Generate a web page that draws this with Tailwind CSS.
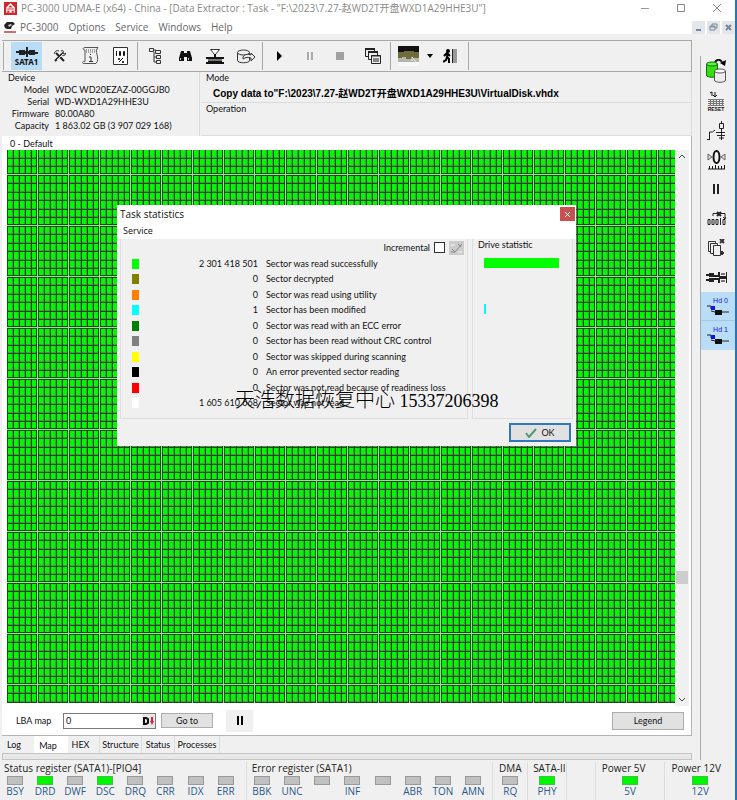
<!DOCTYPE html>
<html lang="en">
<head>
  <meta charset="UTF-8">
  <meta name="viewport" content="width=device-width, initial-scale=1">
  <title>PC-3000 UDMA-E</title>
  <script src="https://cdn.jsdelivr.net/npm/@tailwindcss/browser@4"></script>
</head>
<body class="bg-[#f0f0f0] text-[#111] font-['Lato','Noto_Sans_CJK_SC',sans-serif] text-[9px] leading-3">
<div class="relative min-h-screen flex flex-col border-r-2 border-[#2b73b5]">

  <!-- Title bar -->
  <header class="bg-white font-['Open_Sans','Noto_Sans_CJK_SC',sans-serif] text-[#8a8a8a]">
    <div class="h-4 flex items-center pl-1">
      <svg class="w-[13px] h-[13px] mr-1 shrink-0" viewBox="0 0 12 12"><rect width="12" height="12" fill="#d8232a"/><path d="M6 1 2 5v5h8V5z" fill="#fff"/><path d="M6 3 4 5h4zM3 6h6v1H3zM3 8h2v2H3zM7 8h2v2H7z" fill="#d8232a"/></svg>
      <h1 class="text-[10px] whitespace-nowrap">PC-3000 UDMA-E (x64) - China - [Data Extractor : Task - "F:\2023\7.27-赵WD2T开盘WXD1A29HHE3U"]</h1>
      <div class="ml-auto flex">
        <button class="w-9 h-4 flex items-center justify-center" aria-label="Minimize"><svg class="w-2 h-2" viewBox="0 0 8 8" stroke="#999"><path d="M0 4.5h8"/></svg></button>
        <button class="w-9 h-4 flex items-center justify-center" aria-label="Maximize"><svg class="w-2 h-2" viewBox="0 0 8 8" stroke="#888" fill="none"><path d="M.5.5h7v7h-7z"/></svg></button>
        <button class="w-9 h-4 flex items-center justify-center" aria-label="Close"><svg class="w-2 h-2" viewBox="0 0 8 8" stroke="#888"><path d="m0 0 8 8M8 0 0 8"/></svg></button>
      </div>
    </div>
    <div class="h-[18px] flex items-center pl-1 pt-1">
      <svg class="w-3 h-3 mr-1 shrink-0" viewBox="0 0 12 12"><path d="M0 4 3 1h6l2 2-3 2-1 3H3L1 7z" fill="#222"/><path d="m4 4 3-1 1 1-3 2z" fill="#ccc"/><path d="M0 10h12v2H0z" fill="#d96a6a"/></svg>
      <nav class="flex gap-[10px] text-[10px] text-[#666]">
        <button>PC-3000</button><button>Options</button><button>Service</button><button>Windows</button><button>Help</button>
      </nav>
      <div class="ml-auto flex gap-[2px]">
        <button class="w-[13px] h-[13px] bg-[#e3e7ec]" aria-label="Minimize child"><svg class="w-full h-full" viewBox="0 0 13 13"><path d="M4 9h5" stroke="#7a8796" stroke-width="2"/></svg></button>
        <button class="w-[13px] h-[13px] bg-[#e3e7ec]" aria-label="Restore child"><svg class="w-full h-full" viewBox="0 0 13 13" fill="none" stroke="#7a8796"><path d="M5 5V3h5v4H8M3 5h5v4H3zM3 6h5"/></svg></button>
        <button class="w-[13px] h-[13px] bg-[#e3e7ec]" aria-label="Close child"><svg class="w-full h-full" viewBox="0 0 13 13" stroke="#7a8796" stroke-width="2"><path d="m4 4 5 5M9 4 4 9"/></svg></button>
      </div>
    </div>
  </header>

  <div class="flex flex-1">
    <main class="flex-1 min-w-0 flex flex-col pl-[2px] pr-2 pt-[6px]">

      <!-- Toolbar -->
      <div class="h-8 flex items-center border-t border-b border-r border-[#a8a8a8] pl-px">
        <span class="w-px h-7 bg-[#aaa] mr-[7px]"></span>
        <button class="w-[31px] h-7 bg-[#b9dcf7] flex flex-col items-center justify-center">
          <svg class="w-[22px] h-[10px]" viewBox="0 0 22 10" fill="#222"><path d="M0 5h22v1H0zM3 3h6v5H3zM13 3h6v5h-6zM10 0h2v10h-2zM9 4h4v3H9z"/><path d="M0 4h3v1H0zM19 6h3v1h-3z"/></svg>
          <span class="font-['Noto_Sans'] font-bold text-[8px] leading-[9px]">SATA1</span>
        </button>
        <button class="w-[30px] h-7 ml-[3px] grid place-items-center" aria-label="Tools"><svg class="w-3 h-3" viewBox="0 0 12 12" fill="none" stroke="#222"><path d="m1 11 8-8M2 3l8 8" stroke-width="2"/><path d="M0 4c1-3 3-4 5-3M7 1c2-1 3 0 2 2 1 1 2 1 3 0-1 3-3 3-4 2"/><path d="m3 10 6-6" stroke="#eee"/></svg></button>
        <button class="w-[30px] h-7 grid place-items-center" aria-label="Information"><svg class="w-[17px] h-[18px]" viewBox="0 0 17 18" fill="none" stroke="#555"><path d="M3 .5h13c-2 2-2 4-1 7s1 7-1 9H2c-2 0-2-2 0-2h1V3C1 3 0 1 3 .5z"/><path d="M4 3h9M4 5h9" stroke-dasharray="1 1"/><path d="M8.500 7v1M7 10h2v4M7 14.500h4" stroke="#333"/></svg></button>
        <button class="w-[30px] h-7 grid place-items-center" aria-label="Percentage"><svg class="w-[15px] h-[18px]" viewBox="0 0 15 18"><path d="M.5.5h14v17H.5z" fill="#fff" stroke="#333"/><path d="M3.500 4v5M6.500 4.500h1v4h-1zM10.500 4.500h1v4h-1z" fill="none" stroke="#111"/><path d="m6 15 4-4" stroke="#111"/><circle cx="6" cy="12" r="1"/><circle cx="10" cy="15" r="1"/></svg></button>
        <span class="w-px h-7 bg-[#aaa] mx-[2px]"></span>
        <button class="w-[30px] h-7 grid place-items-center" aria-label="Tree"><svg class="w-[13px] h-[16px]" viewBox="0 0 13 16" fill="#eee" stroke="#333"><path d="M.5.5h4v3h-4zM6.500 2.500h5v3h-5zM7.500 7.500h4v3h-4zM7.500 12.500h4v3h-4z"/><path d="M5 2h2M5 4v10h2M5 9h2" fill="none"/></svg></button>
        <button class="w-[30px] h-7 grid place-items-center" aria-label="Find"><svg class="w-[13px] h-[12px]" viewBox="0 0 13 12" fill="#111"><path d="M2 1h3v2h3V1h3l2 7v3H8V7H5v4H0V8z"/><path d="M1 8h1v2H1zM9 8h1v2H9zM3 2v3" fill="#ccc"/></svg></button>
        <button class="w-[30px] h-7 grid place-items-center" aria-label="Filter"><svg class="w-[18px] h-[17px]" viewBox="0 0 18 17"><path d="M4.500 1.500h9L9 7z" fill="#fff" stroke="#333"/><path d="M0 9h18v2H0zM2 11h14v3H2zM0 14h18v2H0zM8 6h2v4H8z" fill="#111"/><path d="M1 12h16" stroke="#ddd"/></svg></button>
        <button class="w-[30px] h-7 ml-px grid place-items-center" aria-label="Disk export"><svg class="w-[19px] h-[15px]" viewBox="0 0 19 15" fill="#eee" stroke="#333"><path d="M.5 3.500v8c0 3 12 3 12 0v-8"/><ellipse cx="6.500" cy="3.500" rx="6" ry="2.500"/><path d="M6 8c2-3 5-3 8-2V4l4 4-4 4V9c-3-1-5-1-8 1z"/></svg></button>
        <span class="w-px h-7 bg-[#aaa] mx-px"></span>
        <button class="w-[30px] h-7 grid place-items-center" aria-label="Start"><svg class="w-2 h-[10px]" viewBox="0 0 8 10"><path d="m2 0 5 5-5 5z"/></svg></button>
        <button class="w-[30px] h-7 ml-px grid place-items-center" aria-label="Pause"><svg class="w-2 h-[10px]" viewBox="0 0 8 10" fill="#aaa"><path d="M1 1h2v8H1zM5 1h2v8H5z"/></svg></button>
        <button class="w-[30px] h-7 grid place-items-center" aria-label="Stop"><svg class="w-2 h-2" viewBox="0 0 8 8"><path d="M0 0h8v8H0z" fill="#a0a0a0"/></svg></button>
        <button class="w-[30px] h-7 ml-[3px] grid place-items-center" aria-label="Windows"><svg class="w-[16px] h-[16px]" viewBox="0 0 16 16" fill="#eee" stroke="#222"><path d="M.5.5h9v8h-9z"/><path d="M0 1h10" stroke-width="2"/><path d="M3.500 3.500h9v8h-9z"/><path d="M3 4h10" stroke-width="2"/><path d="M6.500 7.500h9v8h-9z"/><path d="M6 8h10M8 11h6M8 13h6"/></svg></button>
        <span class="w-px h-7 bg-[#aaa] mx-[2px]"></span>
        <button class="w-[30px] h-7 grid place-items-center" aria-label="Map view"><svg class="w-[21px] h-[20px]" viewBox="0 0 21 20"><path d="M0 0h21v20H0z" fill="#f8f8f8"/><path d="M0 0h21v6H0z" fill="#111"/><path d="M0 6h6V5h10v1h5v7H0z" fill="#6e6b3c"/><path d="M0 12h4v-1h4v2h8v-1h5v4H0z" fill="#b5b5b0"/><path d="m14 11 5 6M14 11v4" stroke="#eee"/></svg></button>
        <button class="w-[11px] h-7 ml-px grid place-items-center" aria-label="Map view menu"><svg class="w-[6px] h-[4px]" viewBox="0 0 6 4"><path d="M0 0h6L3 4z"/></svg></button>
        <button class="w-[30px] h-7 grid place-items-center" aria-label="Exit"><svg class="w-[14px] h-[14px]" viewBox="0 0 14 14"><path d="M9 0h5v14H9z" fill="#999"/><path d="M9.500 0v14" stroke="#222"/><circle cx="5" cy="2" r="2"/><path d="m5 4-1 4 2 2v4M4 8l-1 3-3 2M1 7l3-3 3 3" fill="none" stroke="#000" stroke-width="2"/></svg></button>
        <span class="w-px h-7 bg-[#aaa] mx-[3px]"></span>
      </div>

      <!-- Device and mode -->
      <div class="h-[64px] flex gap-px">
        <section class="w-[198px] border-r border-[#ddd] pl-[6px]">
          <h2>Device</h2>
          <dl class="grid grid-cols-[41px_1fr] gap-x-[6px] auto-rows-[12px] leading-[12px] whitespace-nowrap">
            <dt class="text-right">Model</dt><dd>WDC WD20EZAZ-00GGJB0</dd>
            <dt class="text-right">Serial</dt><dd>WD-WXD1A29HHE3U</dd>
            <dt class="text-right">Firmware</dt><dd>80.00A80</dd>
            <dt class="text-right">Capacity</dt><dd>1 863.02 GB (3 907 029 168)</dd>
          </dl>
        </section>
        <div class="flex-1 flex flex-col">
          <section class="h-[31px] border-b border-r border-[#dcdcdc] pl-[5px]">
            <h2>Mode</h2>
            <p class="pl-[7px] pt-[4px] text-black text-[10px] font-bold whitespace-nowrap font-['Liberation_Sans','Noto_Sans_CJK_SC',sans-serif]">Copy data to"F:\2023\7.27-赵WD2T开盘WXD1A29HHE3U\VirtualDisk.vhdx</p>
          </section>
          <section class="flex-1 border-b border-r border-[#dcdcdc] pl-[5px]"><h2>Operation</h2></section>
        </div>
      </div>

      <!-- Sector map -->
      <section class="flex-1 flex flex-col bg-white border-r border-b border-[#b5b5b5]">
        <h2 class="h-[14px] pl-[8px] pt-[2px]">0 - Default</h2>
        <div class="flex-1 flex pl-[5px]">
          <svg class="flex-1 min-w-0 h-[553px]" viewBox="0 0 668 553" preserveAspectRatio="none">
            <defs>
              <!-- five by six sectors, closed by a light line on the right and at the bottom -->
              <pattern id="block" y="25" width="31" height="51" patternUnits="userSpaceOnUse">
                <rect width="31" height="51" fill="#00f800"/>
                <path d="M5 0h1v51H5zM11 0h1v51h-1zM17 0h1v51h-1zM23 0h1v51h-1zM0 7h31v1H0zM0 16h31v1H0zM0 24h31v1H0zM0 33h31v1H0zM0 41h31v1H0z" fill="#5c8a55"/>
                <path d="M0 0h1v51H0zM6 0h1v51H6zM12 0h1v51h-1zM18 0h1v51h-1zM24 0h1v51h-1zM29 0h1v51h-1zM0 0h31v1H0zM0 8h31v1H0zM0 17h31v1H0zM0 25h31v1H0zM0 34h31v1H0zM0 42h31v1H0zM0 49h31v1H0z" fill="#085808"/>
                <path d="M30 0h1v51h-1zM0 50h31v1H0z" fill="#b2cfaa"/>
              </pattern>
            </defs>
            <rect width="668" height="553" fill="url(#block)"/>
          </svg>
          <div class="w-[14px] bg-[#f0f0f0] flex flex-col items-center pt-1 pb-1">
            <svg class="w-[6px] h-[4px]" viewBox="0 0 6 4" fill="none" stroke="#444"><path d="m0 4 3-3 3 3"/></svg>
            <span class="flex-[408]"></span>
            <span class="w-3 h-[13px] bg-[#cdcdcd]"></span>
            <span class="flex-[113]"></span>
            <svg class="w-[6px] h-[4px]" viewBox="0 0 6 4" fill="none" stroke="#444"><path d="m0 0 3 3 3-3"/></svg>
          </div>
          <span class="w-[2px] bg-white"></span>
        </div>
        <div class="h-[29px] flex items-center pl-[14px] pr-[7px]">
          <label for="lba" class="w-[47px]">LBA map</label>
          <div class="w-[93px] h-4 flex border border-[#7a7a7a]">
            <input id="lba" value="0" class="flex-1 min-w-0 pl-[2px] outline-none">
            <button class="w-[13px] bg-[#e8e8e8] grid place-items-center" aria-label="Number base"><svg class="w-[11px] h-2" viewBox="0 0 11 8"><path d="M1 1h2l2 1v4L3 7H1z" fill="none" stroke="#111" stroke-width="2"/><path d="M8 0h2v4h1L9 8 7 4h1z" fill="#e0203c"/></svg></button>
          </div>
          <button class="w-[52px] h-[15px] ml-[5px] bg-[#e1e1e1] border border-[#adadad] leading-3">Go to</button>
          <button class="w-[27px] h-[22px] ml-[13px] bg-[#f0f0f0] grid place-items-center" aria-label="Pause map"><svg class="w-[6px] h-[9px]" viewBox="0 0 6 9"><path d="M0 0h2v9H0zM4 0h2v9H4z"/></svg></button>
          <button class="w-[72px] h-[18px] ml-auto bg-[#e1e1e1] border border-[#adadad]">Legend</button>
        </div>
      </section>

      <!-- Tabs -->
      <nav class="h-[17px] flex items-center">
        <button class="w-8 h-full pr-2">Log</button>
        <button class="w-[34px] h-full pr-[6px] bg-white pt-[2px]">Map</button>
        <button class="w-8 h-full pr-[6px] border-r border-[#ddd]">HEX</button>
        <button class="w-[42px] h-full border-r border-[#ddd]">Structure</button>
        <button class="w-[33px] h-full border-r border-[#ddd]">Status</button>
        <button class="w-[45px] h-full border-r border-[#ddd]">Processes</button>
      </nav>
      <div class="h-[7px] border border-[#c4c4c4] bg-[#e8e8e8]"></div>
    </main>

    <!-- Side toolbar -->
    <aside class="w-[35px] mt-[22px] border-l border-[#aaa] flex flex-col items-center">
      <button class="w-full h-[30px] pr-1 grid place-items-center" aria-label="Copy disk"><svg class="w-5 h-6" viewBox="0 0 20 24"><path d="M.5 5v11c0 3 11 3 11 0V5" fill="#35e010" stroke="#156b15"/><ellipse cx="6" cy="5" rx="5.500" ry="2" fill="#5af53a" stroke="#156b15"/><path d="M8.500 12v9c0 3 11 3 11 0v-9" fill="#eee" stroke="#555"/><ellipse cx="14" cy="12" rx="5.500" ry="2" fill="#fff" stroke="#555"/><path d="M9 3c2-3 5-3 7 0" fill="none" stroke="#111" stroke-width="2"/><path d="m20 1-1 6-5-3z"/></svg></button>
      <button class="w-full h-[30px] pr-1 flex flex-col items-center justify-center"><svg class="w-[18px] h-[15px]" viewBox="0 0 18 15"><path d="m3 2 2-1v4M8 1v5M6 4l2 2 2-2" fill="none" stroke="#111"/><path d="M1 8h16v7H1z" fill="#777"/><path d="M1 9.500h16M1 11.500h16M1 13.500h16" stroke="#eee" stroke-dasharray="2 1"/></svg><span class="font-['Liberation_Sans'] font-bold text-[5px] leading-[6px]">RESET</span></button>
      <button class="w-full h-[30px] pr-1 grid place-items-center" aria-label="Relay"><svg class="w-[18px] h-5" viewBox="0 0 18 20" fill="none" stroke="#222"><path d="M0 18.500h3M2.500 18v-7h3L8 9M9 11.500h9M14.500 0v19M10 14.500h9M12 17h5"/><path d="M12.500 2.500h4v5h-4z" fill="#eee"/></svg></button>
      <button class="w-full h-[28px] pr-1 grid place-items-center" aria-label="Recalibrate"><svg class="w-[19px] h-5" viewBox="0 0 19 20"><ellipse cx="9.500" cy="7" rx="3" ry="6" fill="none" stroke="#111" stroke-width="2"/><path d="m1 4 4 3-4 3zM18 4l-4 3 4 3z" fill="#ddd" stroke="#666"/><path d="M1 19h17M2.500 19v-3M5.500 19v-3M8.500 19v-4M11.500 19v-3M14.500 19v-3M17.500 19v-4" stroke="#111"/></svg></button>
      <button class="w-full h-[30px] pr-1 grid place-items-center" aria-label="Pause"><svg class="w-[6px] h-[10px]" viewBox="0 0 6 10"><path d="M0 0h2v10H0zM4 0h2v10H4z" fill="#222"/></svg></button>
      <button class="w-full h-[28px] pr-1 grid place-items-center" aria-label="Skip sectors"><svg class="w-[19px] h-[14px]" viewBox="0 0 19 14" fill="none" stroke="#222"><path d="M6 5V2.500h12V8M16 6l2 2 1-2M1 8.500h2v5H1zM5 8.500h2v5H5zM9 8.500h2v5H9zM13.500 7v7M16 8.500h2v5h-2z"/><path d="m10 1 4 4M14 1l-4 4" stroke-width="2"/></svg></button>
      <button class="w-full h-[32px] pr-1 grid place-items-center" aria-label="Clear pages"><svg class="w-[18px] h-[18px]" viewBox="0 0 18 18" fill="#f0f0f0" stroke="#333"><path d="M1.500 2.500h7v10h-7z"/><path d="M3.500 4.500h7v10h-7z"/><path d="M6.500 6.500h7v10h-7z"/><path d="m13 0 4 4M17 0l-4 4" stroke-width="2"/><path d="M13 14h4M15 12v4" stroke-width="2"/></svg></button>
      <button class="w-full h-[27px] pr-1 grid place-items-center" aria-label="Connector"><svg class="w-[21px] h-[11px]" viewBox="0 0 21 11"><path d="M0 2h3V1h5v2h4V0h2v4h6V0h1v11h-1V7h-6v4h-2V8H8v2H3V9H0V7h3V4H0z" fill="#222"/><path d="M0 5.500h13" stroke="#eee"/><path d="M15 1h4v2h-4zM15 8h4v2h-4z" fill="#777"/></svg></button>
      <button class="w-full h-[29px] mt-px pt-[5px] bg-[#b9dcf7] border-b border-[#a3c9e8] text-[#1515e0] text-[7px] leading-[8px] font-['Liberation_Sans'] flex flex-col items-center"><span class="pl-[5px]">Hd 0</span><svg class="w-[22px] h-[10px]" viewBox="0 0 22 10"><path d="M0 1h4v3M4 6l4 1h14" fill="none" stroke="#222"/><path d="M4 1h4v4H4z" fill="#1515e0"/><path d="M8 5h7v5H8z" fill="#111"/></svg></button>
      <button class="w-full h-[29px] pt-[5px] bg-[#b9dcf7] text-[#1515e0] text-[7px] leading-[8px] font-['Liberation_Sans'] flex flex-col items-center"><span class="pl-[5px]">Hd 1</span><svg class="w-[22px] h-[10px]" viewBox="0 0 22 10"><path d="M0 1h4v3M4 6l4 1h14" fill="none" stroke="#222"/><path d="M4 1h4v4H4z" fill="#1515e0"/><path d="M8 5h7v5H8z" fill="#111"/></svg></button>
    </aside>
  </div>

  <!-- Registers -->
  <footer class="h-[40px] pt-[2px] flex font-['Open_Sans',sans-serif] text-[10px] leading-[12px] text-[#2a5a8c] text-center whitespace-nowrap">
    <section class="flex-[247] border-r border-[#ddd]">
      <h2 class="pl-1 pb-[2px] text-left text-[#222]">Status register (SATA1)-[PIO4]</h2>
      <div class="grid grid-cols-8 pr-[5px]">
        <div><i class="block w-4 h-[9px] mx-auto bg-[#c0c0c0] border border-[#999]"></i>BSY</div>
        <div><i class="block w-4 h-[9px] mx-auto bg-[#00f500] border border-[#3ec43e]"></i>DRD</div>
        <div><i class="block w-4 h-[9px] mx-auto bg-[#c0c0c0] border border-[#999]"></i>DWF</div>
        <div><i class="block w-4 h-[9px] mx-auto bg-[#00f500] border border-[#3ec43e]"></i>DSC</div>
        <div><i class="block w-4 h-[9px] mx-auto bg-[#c0c0c0] border border-[#999]"></i>DRQ</div>
        <div><i class="block w-4 h-[9px] mx-auto bg-[#c0c0c0] border border-[#999]"></i>CRR</div>
        <div><i class="block w-4 h-[9px] mx-auto bg-[#c0c0c0] border border-[#999]"></i>IDX</div>
        <div><i class="block w-4 h-[9px] mx-auto bg-[#c0c0c0] border border-[#999]"></i>ERR</div>
      </div>
    </section>
    <section class="flex-[247] border-r border-[#ddd]">
      <h2 class="pl-[5px] pb-[2px] text-left text-[#222]">Error register (SATA1)</h2>
      <div class="grid grid-cols-8 pr-1">
        <div><i class="block w-4 h-[9px] mx-auto bg-[#c0c0c0] border border-[#999]"></i>BBK</div>
        <div><i class="block w-4 h-[9px] mx-auto bg-[#c0c0c0] border border-[#999]"></i>UNC</div>
        <div><i class="block w-4 h-[9px] mx-auto bg-[#c0c0c0] border border-[#999]"></i></div>
        <div><i class="block w-4 h-[9px] mx-auto bg-[#c0c0c0] border border-[#999]"></i>INF</div>
        <div><i class="block w-4 h-[9px] mx-auto bg-[#c0c0c0] border border-[#999]"></i></div>
        <div><i class="block w-4 h-[9px] mx-auto bg-[#c0c0c0] border border-[#999]"></i>ABR</div>
        <div><i class="block w-4 h-[9px] mx-auto bg-[#c0c0c0] border border-[#999]"></i>TON</div>
        <div><i class="block w-4 h-[9px] mx-auto bg-[#c0c0c0] border border-[#999]"></i>AMN</div>
      </div>
    </section>
    <section class="flex-[34] border-r border-[#ddd]"><h2 class="pb-[2px] text-[#222]">DMA</h2><i class="block w-4 h-[9px] mx-auto bg-[#c0c0c0] border border-[#999]"></i>RQ</section>
    <section class="flex-[38] border-r border-[#ddd]"><h2 class="pl-[5px] pb-[2px] text-left text-[#222]">SATA-II</h2><i class="block w-4 h-[9px] mx-auto bg-[#00f500] border border-[#3ec43e]"></i>PHY</section>
    <section class="flex-[28] border-r border-[#ddd]"></section>
    <section class="flex-[69] border-r border-[#ddd]"><h2 class="pl-[6px] pb-[2px] text-left text-[#222]">Power 5V</h2><i class="block w-4 h-[9px] mx-auto bg-[#00f500] border border-[#3ec43e]"></i>5V</section>
    <section class="flex-[70]"><h2 class="pl-[6px] pb-[2px] text-left text-[#222]">Power 12V</h2><i class="block w-4 h-[9px] mx-auto bg-[#00f500] border border-[#3ec43e]"></i>12V</section>
  </footer>

  <!-- Task statistics dialog -->
  <div role="dialog" aria-label="Task statistics" class="absolute left-[117px] top-[205px] w-[459px] h-[241px] bg-[#f0f0f0] flex flex-col">
    <div class="bg-white h-[34px] font-['Open_Sans',sans-serif]">
      <div class="h-[18px] flex items-center pl-[3px] pr-px">
        <h2 class="text-[10px]">Task statistics</h2>
        <button class="ml-auto w-[15px] h-[14px] bg-[#c75050] grid place-items-center" aria-label="Close"><svg class="w-[5px] h-[5px]" viewBox="0 0 5 5" stroke="#fff"><path d="m0 0 5 5M5 0 0 5"/></svg></button>
      </div>
      <button class="block pl-[6px] text-[9px] leading-4">Service</button>
    </div>
    <div class="flex-1 flex gap-1 px-[3px]">
      <section class="w-[348px] border-x border-b border-[#dedede]">
        <div class="h-[17px] flex items-center justify-end gap-1 pr-[3px]">
          <label for="incremental">Incremental</label>
          <input id="incremental" type="checkbox" class="appearance-none w-[11px] h-[11px] bg-white border border-[#333]">
          <button class="w-[15px] h-[14px] bg-[#ccc]" aria-label="Edit"><svg class="w-full h-full" viewBox="0 0 15 14" fill="none" stroke="#888"><path d="M2 11h4l7-8M9 3l3 3M3 8l3 3"/><path d="M2 4h4M9 11h4" stroke="#f4f4f4"/></svg></button>
        </div>
        <table class="w-full h-[155px] whitespace-nowrap">
          <tr><td class="w-[18px] pl-[11px]"><i class="block w-[7px] h-[10px] bg-[#00ff00]"></i></td><td class="w-[119px] text-right">2 301 418 501</td><td class="pl-2">Sector was read successfully</td></tr>
          <tr><td class="pl-[11px]"><i class="block w-[7px] h-[10px] bg-[#808000]"></i></td><td class="text-right">0</td><td class="pl-2">Sector decrypted</td></tr>
          <tr><td class="pl-[11px]"><i class="block w-[7px] h-[10px] bg-[#ff8000]"></i></td><td class="text-right">0</td><td class="pl-2">Sector was read using utility</td></tr>
          <tr><td class="pl-[11px]"><i class="block w-[7px] h-[10px] bg-[#00ffff]"></i></td><td class="text-right">1</td><td class="pl-2">Sector has been modified</td></tr>
          <tr><td class="pl-[11px]"><i class="block w-[7px] h-[10px] bg-[#008000]"></i></td><td class="text-right">0</td><td class="pl-2">Sector was read with an ECC error</td></tr>
          <tr><td class="pl-[11px]"><i class="block w-[7px] h-[10px] bg-[#808080]"></i></td><td class="text-right">0</td><td class="pl-2">Sector has been read without CRC control</td></tr>
          <tr><td class="pl-[11px]"><i class="block w-[7px] h-[10px] bg-[#ffff00]"></i></td><td class="text-right">0</td><td class="pl-2">Sector was skipped during scanning</td></tr>
          <tr><td class="pl-[11px]"><i class="block w-[7px] h-[10px] bg-black"></i></td><td class="text-right">0</td><td class="pl-2">An error prevented sector reading</td></tr>
          <tr><td class="pl-[11px]"><i class="block w-[7px] h-[10px] bg-[#ff0000]"></i></td><td class="text-right">0</td><td class="pl-2">Sector was not read because of readiness loss</td></tr>
          <tr><td class="pl-[11px]"><i class="block w-[7px] h-[10px] bg-white"></i></td><td class="text-right">1 605 610 668</td><td class="pl-2">Sector was not read</td></tr>
        </table>
      </section>
      <section class="flex-1 border-x border-b border-[#dedede]">
        <h3 class="pl-[5px]">Drive statistic</h3>
        <div class="mt-[7px] ml-[11px] w-[75px] h-[10px] bg-[#00ff00]"></div>
        <div class="mt-9 ml-[11px] w-[2px] h-[10px] bg-[#00ffff]"></div>
      </section>
    </div>
    <div class="h-[27px] flex justify-end items-center pr-[5px]">
      <button class="w-[62px] h-[19px] bg-[#e1e1e1] border-2 border-[#2f78bd] flex items-center justify-center gap-1"><svg class="w-3 h-[10px]" viewBox="0 0 12 10"><path d="m1 5 3 4 7-8" fill="none" stroke="#4a9c75" stroke-width="2"/></svg>OK</button>
    </div>
  </div>

  <!-- Overlaid contact line -->
  <p class="absolute left-[235px] top-[387px] text-black text-[20px] leading-[24px] font-light whitespace-nowrap font-['Noto_Sans_CJK_SC',sans-serif]">天浩数据恢复中心 <span class="font-['Liberation_Serif',serif] text-[18px]">15337206398</span></p>
</div>
</body>
</html>
